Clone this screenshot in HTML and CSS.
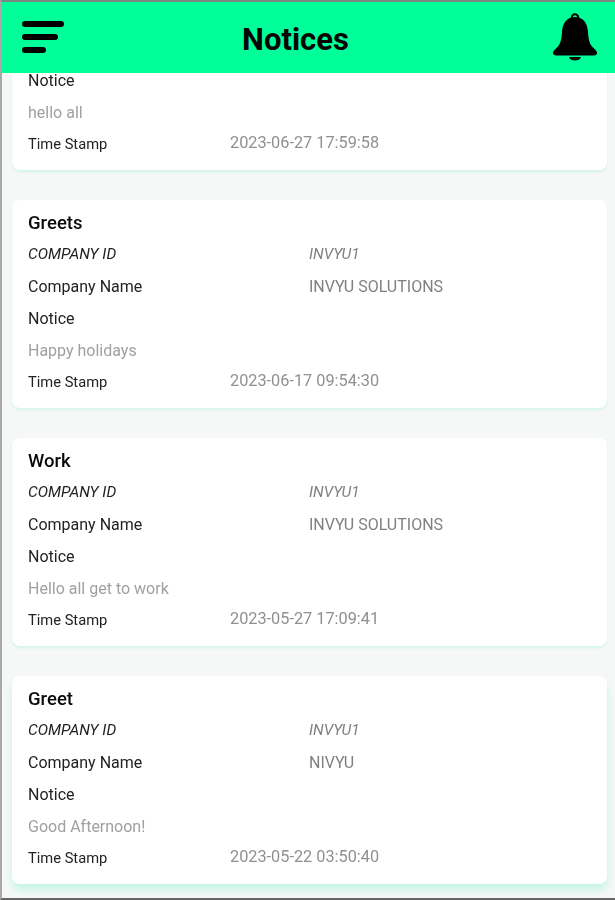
FILE: index.html
```
<!DOCTYPE html>
<html lang="en">
<head>
<meta charset="utf-8">
<title>Notices</title>
<link rel="stylesheet" href="styles.css">
</head>
<body>
<div class="screen">
  <header class="topbar">
    <svg class="menu-icon" viewBox="0 0 44 33" aria-hidden="true">
      <rect x="0" y="0" width="42" height="6" rx="3"/>
      <rect x="0" y="13" width="36" height="6" rx="3"/>
      <rect x="0" y="26" width="24" height="6" rx="3"/>
    </svg>
    <h1 class="title">Notices</h1>
    <svg class="bell-icon" viewBox="0 0 44 48" aria-hidden="true">
      <circle class="bell-ring" cx="22" cy="4.500" r="3.200"/>
      <path d="M22 4C13.500 4 9.500 10.500 9 19c-.5 7.500-1.500 11.500-4 14.500L1.500 37C.3 38.300 0 39 0 40c0 1.500 1.200 2.500 3 2.500h38c1.800 0 3-1 3-2.500 0-1-.3-1.700-1.500-3L39 33.500c-2.500-3-3.500-7-4-14.500C34.500 10.500 30.500 4 22 4z"/>
      <path d="M16 44h12c-.6 2.300-3 3.600-6 3.600s-5.400-1.300-6-3.600z"/>
    </svg>
  </header>
  <main class="list">
    <section class="card card-cut">
      <div class="row row-cut">Notice</div>
      <div class="row muted">hello all</div>
      <div class="row stamp"><span class="stamp-label">Time Stamp</span><span class="stamp-value">2023-06-27 17:59:58</span></div>
    </section>
    <section class="card">
      <h2 class="card-title">Greets</h2>
      <div class="row italic"><span class="label">COMPANY ID</span><span class="value">INVYU1</span></div>
      <div class="row"><span class="label">Company Name</span><span class="value">INVYU SOLUTIONS</span></div>
      <div class="row">Notice</div>
      <div class="row muted">Happy holidays</div>
      <div class="row stamp"><span class="stamp-label">Time Stamp</span><span class="stamp-value">2023-06-17 09:54:30</span></div>
    </section>
    <section class="card">
      <h2 class="card-title">Work</h2>
      <div class="row italic"><span class="label">COMPANY ID</span><span class="value">INVYU1</span></div>
      <div class="row"><span class="label">Company Name</span><span class="value">INVYU SOLUTIONS</span></div>
      <div class="row">Notice</div>
      <div class="row muted">Hello all get to work</div>
      <div class="row stamp"><span class="stamp-label">Time Stamp</span><span class="stamp-value">2023-05-27 17:09:41</span></div>
    </section>
    <section class="card card-last">
      <h2 class="card-title">Greet</h2>
      <div class="row italic"><span class="label">COMPANY ID</span><span class="value">INVYU1</span></div>
      <div class="row"><span class="label">Company Name</span><span class="value">NIVYU</span></div>
      <div class="row">Notice</div>
      <div class="row muted">Good Afternoon!</div>
      <div class="row stamp"><span class="stamp-label">Time Stamp</span><span class="stamp-value">2023-05-22 03:50:40</span></div>
    </section>
  </main>
</div>
</body>
</html>
```
FILE: styles.css
```
html, body {
  margin: 0;
  padding: 0;
  height: 100%;
  overflow: hidden;
}

body {
  font-family: Roboto, "Liberation Sans", sans-serif;
  background: #f6f8f7;
}

.screen {
  box-sizing: border-box;
  height: 900px;
  width: 615px;
  border-top: 2px solid #7d8a84;
  border-left: 2px solid #a9a9a9;
  border-bottom: 2px solid #666;
  display: flex;
  flex-direction: column;
  filter: blur(0.45px);
}

.topbar {
  flex: none;
  height: 71px;
  background: #00ff99;
  display: flex;
  align-items: center;
  justify-content: space-between;
  padding: 0 18px 0 20px;
}

.menu-icon {
  width: 44px;
  height: 33px;
  fill: #000;
}

.bell-icon {
  width: 44px;
  height: 48px;
  margin-bottom: 2px;
  fill: #000;
}

.bell-ring {
  fill: none;
  stroke: #000;
  stroke-width: 2;
}

.title {
  margin: 3px 28px 0 0;
  font-size: 31px;
  font-weight: 700;
  color: #050505;
}

.list {
  flex: 1;
  display: flex;
  flex-direction: column;
  gap: 30px;
  padding: 0 8px 0 10px;
}

.card {
  flex: none;
  box-sizing: border-box;
  height: 208px;
  padding: 6px 16px 11px;
  background: #fff;
  border-radius: 8px;
  box-shadow: 0 2px 3px rgba(0, 230, 150, 0.14);
}

.card-cut {
  height: 97px;
  padding-top: 0;
  border-radius: 0 0 8px 8px;
}

.card-last {
  box-shadow: 0 6px 8px rgba(0, 230, 150, 0.2);
}

.card-title {
  margin: 0;
  height: 32px;
  line-height: 34px;
  font-size: 18.500px;
  font-weight: 500;
  color: #0a0a0a;
}

.row {
  display: flex;
  align-items: center;
  height: 32px;
  font-size: 16px;
  color: #222;
}

.row-cut {
  height: 16px;
  line-height: 14px;
  margin-bottom: 7px;
}

.label {
  width: 281px;
}

.value {
  color: #808080;
}

.italic {
  font-style: italic;
  font-size: 15.400px;
}

.muted {
  color: #a0a0a0;
}

.stamp {
  height: 31px;
}

.stamp-label {
  width: 202px;
  font-size: 14.700px;
}

.stamp-value {
  font-size: 16.300px;
  color: #909090;
  margin-top: -2px;
}
```
